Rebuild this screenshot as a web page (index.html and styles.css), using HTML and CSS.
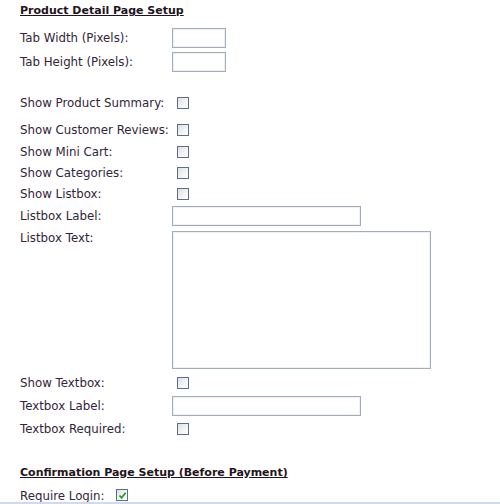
FILE: index.html
```html
<!DOCTYPE html>
<html lang="en">
<head>
    <meta charset="UTF-8">
    <title>Product Detail Page Setup</title>
    <link rel="stylesheet" href="styles.css">
</head>
<body>

    <div class="setup">
        <h2 class="section-title first">Product Detail Page Setup</h2>

        <div class="row field-row">
            <label class="label">Tab Width (Pixels):</label>
            <input type="text" class="text-input small">
        </div>
        <div class="row field-row">
            <label class="label">Tab Height (Pixels):</label>
            <input type="text" class="text-input small">
        </div>

        <div class="row check-row spaced">
            <label class="label">Show Product Summary:</label>
            <span class="check"></span>
        </div>
        <div class="row check-row spaced-small">
            <label class="label">Show Customer Reviews:</label>
            <span class="check"></span>
        </div>
        <div class="row check-row">
            <label class="label">Show Mini Cart:</label>
            <span class="check"></span>
        </div>
        <div class="row check-row">
            <label class="label">Show Categories:</label>
            <span class="check"></span>
        </div>
        <div class="row check-row">
            <label class="label">Show Listbox:</label>
            <span class="check"></span>
        </div>
        <div class="row field-row">
            <label class="label">Listbox Label:</label>
            <input type="text" class="text-input wide">
        </div>
        <div class="row area-row">
            <label class="label">Listbox Text:</label>
            <textarea class="text-area"></textarea>
        </div>
        <div class="row check-row tall">
            <label class="label">Show Textbox:</label>
            <span class="check"></span>
        </div>
        <div class="row field-row">
            <label class="label">Textbox Label:</label>
            <input type="text" class="text-input wide">
        </div>
        <div class="row check-row tall">
            <label class="label">Textbox Required:</label>
            <span class="check"></span>
        </div>

        <h2 class="section-title second">Confirmation Page Setup (Before Payment)</h2>

        <div class="row login-row">
            <label class="label narrow">Require Login:</label>
            <span class="check checked">
                <svg width="9" height="9" viewBox="0 0 9 9"><path d="M1.5 4.5 L3.6 6.8 L7.6 1.8" fill="none" stroke="#21a121" stroke-width="1.8"/></svg>
            </span>
        </div>
    </div>

    <div class="bottom-band"></div>

</body>
</html>
```

FILE: styles.css
```css
body {
    margin: 0;
    padding: 0;
    background: #ffffff;
    font-family: "DejaVu Sans", Verdana, sans-serif;
    font-size: 11.8px;
    color: #33243a;
}

.setup {
    padding-left: 20px;
    height: 502px;
    overflow: hidden;
}

/* Section headings */
.section-title {
    font-size: 11px;
    font-weight: bold;
    line-height: 14px;
    text-decoration: underline;
    color: #1f1420;
    margin: 0;
}

.section-title.first {
    padding-top: 4px;
    height: 22px;
}

.section-title.second {
    margin-top: 26px;
    margin-bottom: 3px;
}

/* Rows */
.row {
    display: flex;
    align-items: center;
}

.field-row {
    height: 24px;
}

.check-row {
    height: 21px;
}

.check-row.tall {
    height: 22px;
}

.spaced {
    margin-top: 18px;
    height: 22px;
}

.spaced-small {
    margin-top: 5px;
    height: 22px;
}

.area-row {
    align-items: flex-start;
    height: 144px;
}

.area-row .label {
    padding-top: 3px;
}

.login-row {
    height: 18px;
    align-items: flex-start;
}

.login-row .label {
    padding-top: 6px;
}

.label {
    width: 152px;
    flex-shrink: 0;
    line-height: 15px;
    padding-top: 1px;
}

.label.narrow {
    width: 96px;
}

/* Inputs */
.text-input {
    box-sizing: border-box;
    height: 20px;
    border: 1px solid #a3adba;
    box-shadow: inset 0 0 0 1px #eef1f4;
    background: #fff;
    padding: 0;
    margin: 0;
}

.text-input.small {
    width: 54px;
}

.text-input.wide {
    width: 189px;
}

.text-area {
    box-sizing: border-box;
    width: 259px;
    height: 138px;
    margin: 3px 0 0 0;
    border: 1px solid #a3adba;
    box-shadow: inset 0 0 0 1px #eef1f4;
    resize: none;
    padding: 0;
}

.check {
    box-sizing: border-box;
    width: 12px;
    height: 12px;
    margin-left: 5px;
    border: 1px solid #5d6f86;
    background: linear-gradient(135deg, #dcdfe4 0%, #f4f5f7 60%, #ffffff 100%);
    display: inline-flex;
    align-items: center;
    justify-content: center;
}

.check.checked {
    margin-left: 0;
    margin-top: 6px;
}

.bottom-band {
    height: 2px;
    background: #cddbea;
}
```
